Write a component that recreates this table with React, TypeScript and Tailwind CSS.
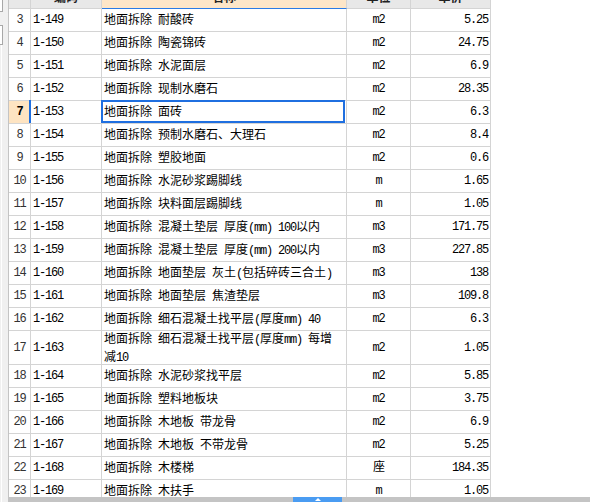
import React from "react";

type Row = { n: number; code: string; name: string; unit: string; price: string; tall?: boolean; sel?: boolean };

const rows: Row[] = [
  { n: 3, code: "1-149", name: "地面拆除 耐酸砖", unit: "m2", price: "5.25" },
  { n: 4, code: "1-150", name: "地面拆除 陶瓷锦砖", unit: "m2", price: "24.75" },
  { n: 5, code: "1-151", name: "地面拆除 水泥面层", unit: "m2", price: "6.9" },
  { n: 6, code: "1-152", name: "地面拆除 现制水磨石", unit: "m2", price: "28.35" },
  { n: 7, code: "1-153", name: "地面拆除 面砖", unit: "m2", price: "6.3", sel: true },
  { n: 8, code: "1-154", name: "地面拆除 预制水磨石、大理石", unit: "m2", price: "8.4" },
  { n: 9, code: "1-155", name: "地面拆除 塑胶地面", unit: "m2", price: "0.6" },
  { n: 10, code: "1-156", name: "地面拆除 水泥砂浆踢脚线", unit: "m", price: "1.65" },
  { n: 11, code: "1-157", name: "地面拆除 块料面层踢脚线", unit: "m", price: "1.05" },
  { n: 12, code: "1-158", name: "地面拆除 混凝土垫层 厚度(mm) 100以内", unit: "m3", price: "171.75" },
  { n: 13, code: "1-159", name: "地面拆除 混凝土垫层 厚度(mm) 200以内", unit: "m3", price: "227.85" },
  { n: 14, code: "1-160", name: "地面拆除 地面垫层 灰土(包括碎砖三合土)", unit: "m3", price: "138" },
  { n: 15, code: "1-161", name: "地面拆除 地面垫层 焦渣垫层", unit: "m3", price: "109.8" },
  { n: 16, code: "1-162", name: "地面拆除 细石混凝土找平层(厚度mm) 40", unit: "m2", price: "6.3" },
  { n: 17, code: "1-163", name: "地面拆除 细石混凝土找平层(厚度mm) 每增|减10", unit: "m2", price: "1.05", tall: true },
  { n: 18, code: "1-164", name: "地面拆除 水泥砂浆找平层", unit: "m2", price: "5.85" },
  { n: 19, code: "1-165", name: "地面拆除 塑料地板块", unit: "m2", price: "3.75" },
  { n: 20, code: "1-166", name: "地面拆除 木地板 带龙骨", unit: "m2", price: "6.9" },
  { n: 21, code: "1-167", name: "地面拆除 木地板 不带龙骨", unit: "m2", price: "5.25" },
  { n: 22, code: "1-168", name: "地面拆除 木楼梯", unit: "座", price: "184.35" },
  { n: 23, code: "1-169", name: "地面拆除 木扶手", unit: "m", price: "1.05" },
];

const mono = "font-['Liberation_Mono','Noto_Sans_CJK_SC',monospace] text-[12px] tracking-[-1.2px]";
const cjk = "font-['Noto_Sans_CJK_SC',sans-serif] text-[12px]";

function Mixed({ text }: { text: string }) {
  const parts = text.split(/([\x00-\x7f]+)/).filter((p) => p.length > 0);
  return (
    <>
      {parts.map((p, i) =>
        /^[\x00-\x7f]+$/.test(p) ? (
          <span key={i} className={mono + " whitespace-pre"}>
            {p}
          </span>
        ) : (
          <span key={i}>{p}</span>
        )
      )}
    </>
  );
}

function NameText({ name }: { name: string }) {
  const lines = name.split("|");
  return (
    <span className={cjk + " leading-[16px] text-black"}>
      {lines.map((l, i) => (
        <React.Fragment key={i}>
          {i > 0 && <br />}
          <Mixed text={l} />
        </React.Fragment>
      ))}
    </span>
  );
}

const line = "border-[#d4d4d4]";

export default function App() {
  return (
    <div className="w-[590px] h-[502px] overflow-hidden bg-white flex">
      {/* left panel */}
      <div className="w-[9px] h-full bg-[#f0f0f0] border-r border-[#c4c4c4] flex flex-col shrink-0">
        <div className="w-[3px] h-[12px] bg-white border-r border-b border-[#a8a8a8]" />
        <div className="h-[13px]" />
        <div className="w-[3px] h-[20px] bg-white border-r border-t border-b border-[#a8a8a8]" />
        <div className="flex-1 flex">
          <div className="w-[1px]" />
          <div className="w-[1px] h-full bg-white" />
        </div>
      </div>

      <div className="flex-1 flex flex-col">
        <div className="h-[497px] overflow-hidden">
          <div className="w-[482px] -mt-[14px]">
            {/* header */}
            <div className="flex h-[23px]">
              <div className={"w-[22px] bg-[#e8e8e8] border-r border-b " + line} />
              <div className={"w-[71px] bg-[#e8e8e8] border-r border-b flex items-center justify-center font-bold text-[#222] " + line + " " + cjk}>
                编码
              </div>
              <div className={"w-[245px] bg-[#fde6c8] border-r border-b border-b-[#2a7be4] flex items-center justify-center font-bold text-[#222] " + cjk + " border-r-[#d4d4d4]"}>
                名称
              </div>
              <div className={"w-[64px] bg-[#e8e8e8] border-r border-b flex items-center justify-center font-bold text-[#222] " + line + " " + cjk}>
                单位
              </div>
              <div className={"w-[80px] bg-[#e8e8e8] border-r border-b flex items-center justify-center font-bold text-[#222] " + line + " " + cjk}>
                单价
              </div>
            </div>

            {rows.map((r) => (
              <div
                key={r.n}
                className={"flex border-b " + line + " " + (r.tall ? "h-[34px]" : "h-[23px]")}
              >
                <div
                  className={
                    "relative w-[22px] border-r flex items-center justify-center " +
                    line +
                    " " +
                    (r.sel ? "bg-[#fee4c2] font-bold text-black" : "text-[#333]")
                  }
                >
                  <span className={mono}>{r.n}</span>
                  {r.sel && <div className="absolute right-[-1px] -top-[1px] bottom-0 w-[2px] bg-[#1f6fe0]" />}
                </div>
                <div className={"w-[71px] border-r flex items-center pl-[2px] text-black " + line}>
                  <span className={mono}>{r.code}</span>
                </div>
                <div className={"relative w-[245px] border-r flex items-center pl-[2px] " + line}>
                  <NameText name={r.name} />
                  {r.sel && (
                    <div className="absolute -left-[1px] -top-[1px] right-[1px] bottom-0 border-2 border-[#1f6fe0]" />
                  )}
                </div>
                <div className={"w-[64px] border-r flex items-center justify-center text-black " + line}>
                  <span className={mono}>{r.unit}</span>
                </div>
                <div className={"w-[80px] border-r flex items-center justify-end pr-[2px] text-black " + line}>
                  <span className={mono}>{r.price}</span>
                </div>
              </div>
            ))}
          </div>
        </div>

        {/* horizontal scrollbar */}
        <div className="h-[5px] bg-[#c4c4c4] flex">
          <div className="ml-[284px] w-[49px] h-full bg-[#4a9cf2] flex justify-center items-start pt-[1px]">
            <svg width="6" height="3" viewBox="0 0 6 3">
              <polygon points="3,0 6,3 0,3" fill="#ffffff" />
            </svg>
          </div>
        </div>
      </div>
    </div>
  );
}
